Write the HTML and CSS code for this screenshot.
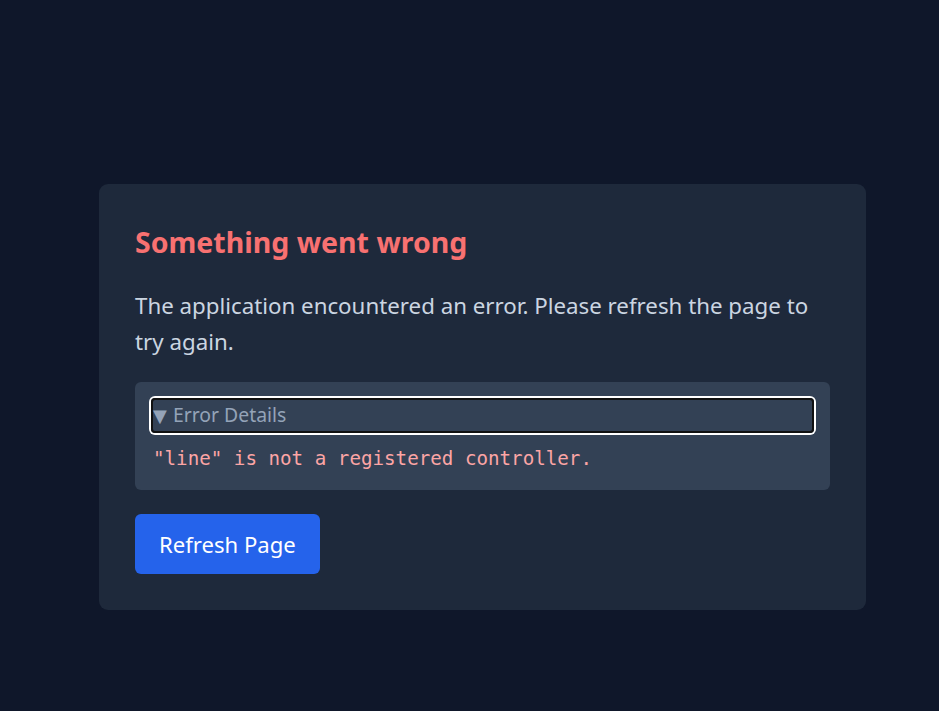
FILE: index.html
```html
<!DOCTYPE html>
<html lang="en">
<head>
<meta charset="utf-8">
<title>Error</title>
<link rel="stylesheet" href="styles.css">
</head>
<body>
<main class="page">
  <section class="card">
    <h1 class="title">Something went wrong</h1>
    <p class="message">The application encountered an error. Please refresh the page to try again.</p>
    <div class="details">
      <div class="summary"><span class="marker">▼</span> Error Details</div>
      <pre class="code">"line" is not a registered controller.</pre>
    </div>
    <button class="btn" type="button">Refresh Page</button>
  </section>
</main>
</body>
</html>
```
FILE: styles.css
```css
html, body {
  margin: 0;
  padding: 0;
  background: #0f172a;
  height: 100%;
}
body {
  font-family: "Noto Sans", "Open Sans", sans-serif;
  color: #cbd5e1;
}
.page {
  display: flex;
  justify-content: flex-start;
  padding: 184px 0 0 99px;
}
.card {
  box-sizing: border-box;
  width: 767px;
  background: #1e293b;
  border-radius: 9px;
  padding: 36px;
}
.title {
  margin: 0 0 24px;
  font-size: 28.5px;
  line-height: 44px;
  font-weight: 700;
  color: #f87171;
}
.message {
  margin: 0 0 22px;
  font-size: 22.3px;
  line-height: 36px;
  color: #cbd5e1;
}
.details {
  background: #334155;
  border-radius: 6px;
  padding: 16px;
}
.summary {
  font-size: 19.4px;
  line-height: 34px;
  color: #94a3b8;
  border-radius: 4px;
  box-shadow: inset 0 0 0 2px #111, 0 0 0 2px #fff;
  padding-left: 2px;
}
.marker {
  font-family: "DejaVu Sans", sans-serif;
  font-size: 18px;
  margin-right: 1px;
}
.code {
  margin: 10px 0 0 2px;
  font-family: "DejaVu Sans Mono", "Liberation Mono", monospace;
  font-size: 19.2px;
  line-height: 31px;
  color: #fca5a5;
}
.btn {
  margin-top: 24px;
  background: #2563eb;
  color: #fff;
  border: 0;
  border-radius: 6px;
  padding: 0 24px;
  height: 60px;
  font-family: inherit;
  font-size: 22.1px;
}
```
